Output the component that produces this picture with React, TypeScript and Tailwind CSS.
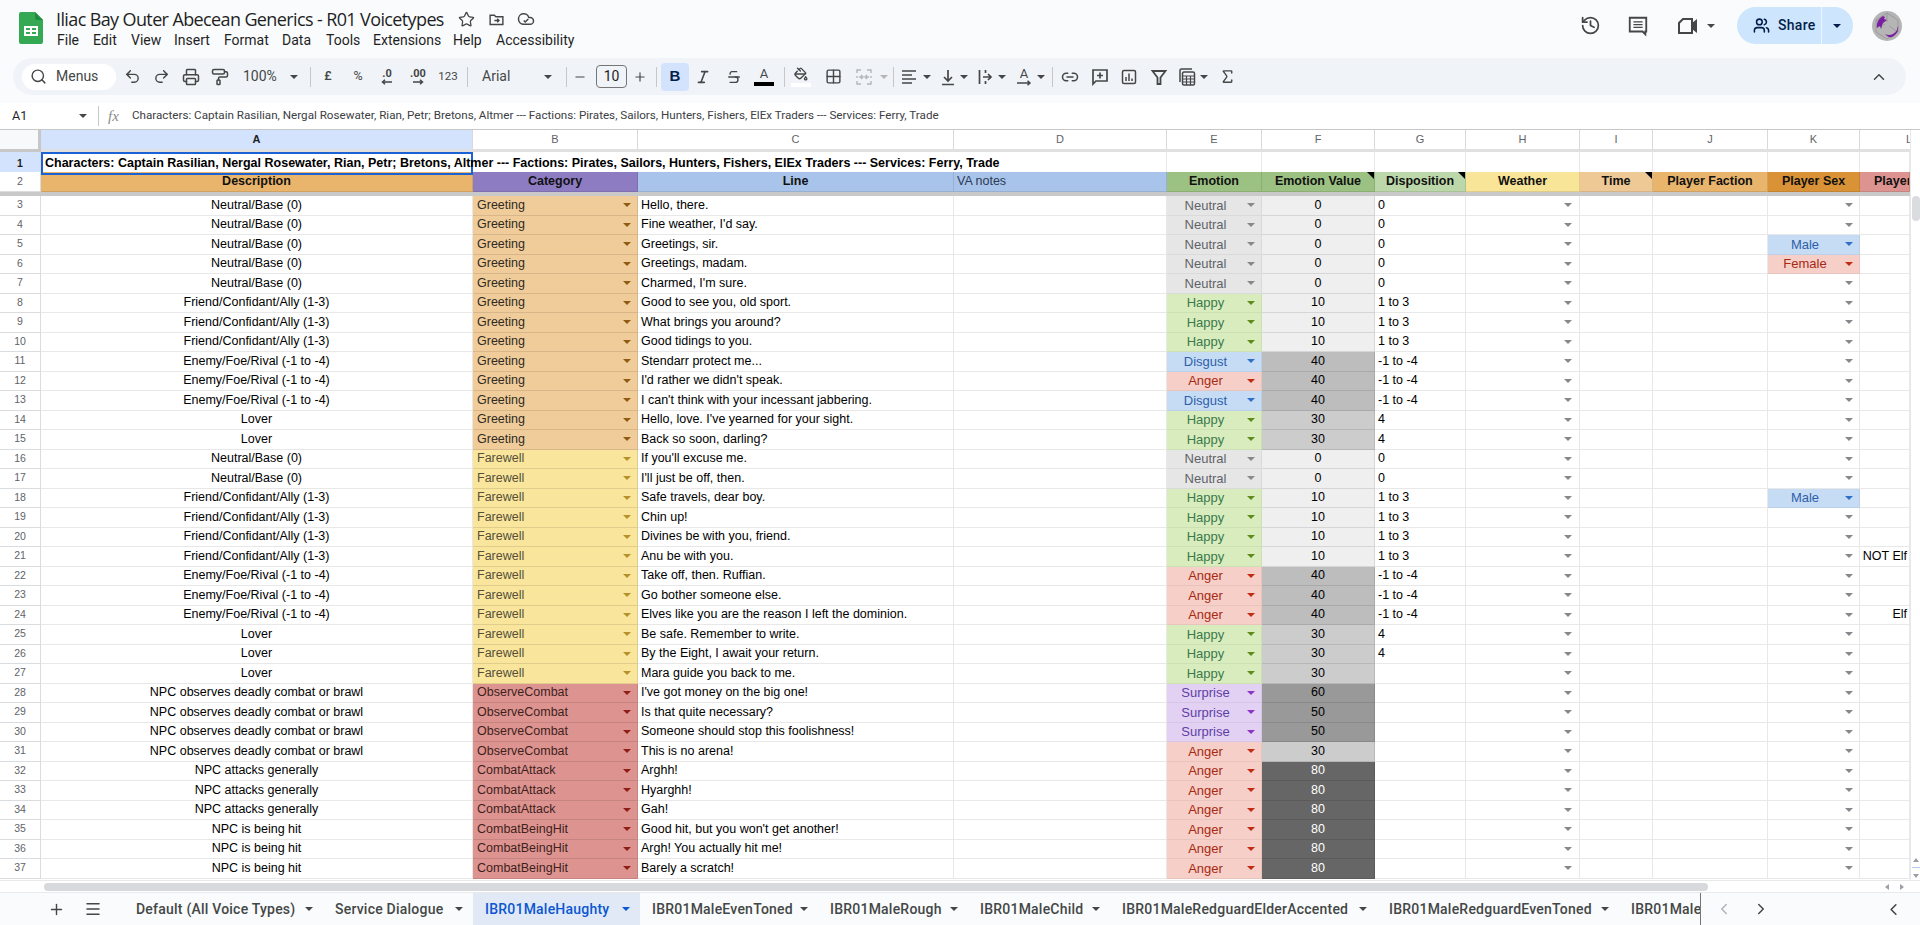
import React from "react";
import {
  Search, Undo2, Redo2, Printer, PaintRoller, Italic, Strikethrough, PaintBucket, Grid2x2, AlignLeft,
  Link2, Sigma, History, Users, ChevronUp, ChevronLeft, ChevronRight, Plus, Minus, Star, Menu,
} from "lucide-react";

const Caret = ({ className = "" }: { className?: string }) => (
  <svg viewBox="0 0 8 4" className={"w-[8px] h-[4px] shrink-0 " + className}>
    <path d="M0 0h8L4 4z" fill="currentColor" />
  </svg>
);

const Ico = ({ children, className = "" }: { children: React.ReactNode; className?: string }) => (
  <span className={"w-[20px] h-[20px] flex items-center justify-center shrink-0 text-[#444746] " + className}>{children}</span>
);

const Sep = ({ className = "" }: { className?: string }) => <span className={"w-px h-[20px] bg-[#c7c7c7] shrink-0 " + className} />;

const Logo = () => (
  <svg width="24" height="32" viewBox="0 0 24 32" className="shrink-0">
    <path d="M2 0h14l8 8v22a2 2 0 0 1-2 2H2a2 2 0 0 1-2-2V2a2 2 0 0 1 2-2z" fill="#34a853" />
    <path d="M16 0l8 8h-6a2 2 0 0 1-2-2z" fill="#1e8e3e" />
    <path d="M5 14h14v10H5z M7 16v2h4v-2z M13 16v2h4v-2z M7 20v2h4v-2z M13 20v2h4v-2z" fill="#fff" fillRule="evenodd" />
  </svg>
);

const Avatar = () => (
  <svg width="30" height="30" viewBox="0 0 30 30" className="shrink-0">
    <circle cx="15" cy="15" r="15" fill="#b5b5b5" />
    <path d="M15 2l11 7v12l-11 7-11-7V9z M15 2v9M4 9l9 5M26 21l-9-6" fill="none" stroke="#8c8c8c" strokeWidth=".6" />
    <path d="M5 17c-1-5 2-10 6-12l2 1-1 2 3 1-4 3c-1 2-1 4-2 6l-1-3z" fill="#7b1fa2" />
    <path d="M13 23c4 2 9 1 12-4l1-4c1 5-2 9-6 11-3 1-5-1-7-3z" fill="#7b1fa2" />
  </svg>
);

type Row = { n: number; a: string; b: string; c: string; e: string; f: number; g?: string; k?: string; l?: string };

const groups: [string, string, [string, string, number, string?, string?, string?][]][] = [
  ["Neutral/Base (0)", "Greeting", [
    ["Hello, there.", "Neutral", 0, "0"],
    ["Fine weather, I'd say.", "Neutral", 0, "0"],
    ["Greetings, sir.", "Neutral", 0, "0", "Male"],
    ["Greetings, madam.", "Neutral", 0, "0", "Female"],
    ["Charmed, I'm sure.", "Neutral", 0, "0"],
  ]],
  ["Friend/Confidant/Ally (1-3)", "Greeting", [
    ["Good to see you, old sport.", "Happy", 10, "1 to 3"],
    ["What brings you around?", "Happy", 10, "1 to 3"],
    ["Good tidings to you.", "Happy", 10, "1 to 3"],
  ]],
  ["Enemy/Foe/Rival (-1 to -4)", "Greeting", [
    ["Stendarr protect me...", "Disgust", 40, "-1 to -4"],
    ["I'd rather we didn't speak.", "Anger", 40, "-1 to -4"],
    ["I can't think with your incessant jabbering.", "Disgust", 40, "-1 to -4"],
  ]],
  ["Lover", "Greeting", [
    ["Hello, love. I've yearned for your sight.", "Happy", 30, "4"],
    ["Back so soon, darling?", "Happy", 30, "4"],
  ]],
  ["Neutral/Base (0)", "Farewell", [
    ["If you'll excuse me.", "Neutral", 0, "0"],
    ["I'll just be off, then.", "Neutral", 0, "0"],
  ]],
  ["Friend/Confidant/Ally (1-3)", "Farewell", [
    ["Safe travels, dear boy.", "Happy", 10, "1 to 3", "Male"],
    ["Chin up!", "Happy", 10, "1 to 3"],
    ["Divines be with you, friend.", "Happy", 10, "1 to 3"],
    ["Anu be with you.", "Happy", 10, "1 to 3", undefined, "NOT Elf"],
  ]],
  ["Enemy/Foe/Rival (-1 to -4)", "Farewell", [
    ["Take off, then. Ruffian.", "Anger", 40, "-1 to -4"],
    ["Go bother someone else.", "Anger", 40, "-1 to -4"],
    ["Elves like you are the reason I left the dominion.", "Anger", 40, "-1 to -4", undefined, "Elf"],
  ]],
  ["Lover", "Farewell", [
    ["Be safe. Remember to write.", "Happy", 30, "4"],
    ["By the Eight, I await your return.", "Happy", 30, "4"],
    ["Mara guide you back to me.", "Happy", 30],
  ]],
  ["NPC observes deadly combat or brawl", "ObserveCombat", [
    ["I've got money on the big one!", "Surprise", 60],
    ["Is that quite necessary?", "Surprise", 50],
    ["Someone should stop this foolishness!", "Surprise", 50],
    ["This is no arena!", "Anger", 30],
  ]],
  ["NPC attacks generally", "CombatAttack", [
    ["Arghh!", "Anger", 80],
    ["Hyarghh!", "Anger", 80],
    ["Gah!", "Anger", 80],
  ]],
  ["NPC is being hit", "CombatBeingHit", [
    ["Good hit, but you won't get another!", "Anger", 80],
    ["Argh! You actually hit me!", "Anger", 80],
    ["Barely a scratch!", "Anger", 80],
  ]],
];

const rows: Row[] = [];
{
  let n = 3;
  for (const [a, b, list] of groups) {
    for (const [c, e, f, g, k, l] of list) rows.push({ n: n++, a, b, c, e, f, g, k, l });
  }
}

const catStyle: Record<string, string> = {
  Greeting: "bg-[#f0cc9a] text-[#2f2a22]",
  Farewell: "bg-[#fae59c] text-[#55503a]",
  ObserveCombat: "bg-[#dd9490] text-[#3f1f1d]",
  CombatAttack: "bg-[#dd9490] text-[#3f1f1d]",
  CombatBeingHit: "bg-[#dd9490] text-[#3f1f1d]",
};
const catCaret: Record<string, string> = {
  Greeting: "text-[#8f5a12]",
  Farewell: "text-[#b3922c]",
  ObserveCombat: "text-[#8e1d17]",
  CombatAttack: "text-[#8e1d17]",
  CombatBeingHit: "text-[#8e1d17]",
};
const emoStyle: Record<string, string> = {
  Neutral: "bg-[#e6e6e6] text-[#5f6368]",
  Happy: "bg-[#d9ecbe] text-[#3a7a4c]",
  Disgust: "bg-[#c6dcf5] text-[#2f5fa8]",
  Anger: "bg-[#f6cfc8] text-[#a62a12]",
  Surprise: "bg-[#e2d1f3] text-[#5f3ea6]",
  Male: "bg-[#c6dcf5] text-[#2f5fa8]",
  Female: "bg-[#f6cfc8] text-[#a62a12]",
};
const emoCaret: Record<string, string> = {
  Neutral: "text-[#85888c]",
  Happy: "text-[#5f8a1c]",
  Disgust: "text-[#2f6fc8]",
  Anger: "text-[#c22a12]",
  Surprise: "text-[#8a35c8]",
  Male: "text-[#2f6fc8]",
  Female: "text-[#c22a12]",
};
const valStyle: Record<number, string> = {
  0: "bg-[#efefef] text-black",
  10: "bg-[#efefef] text-black",
  30: "bg-[#cccccc] text-black",
  40: "bg-[#bdbdbd] text-black",
  50: "bg-[#999999] text-black",
  60: "bg-[#999999] text-black",
  80: "bg-[#666666] text-white",
};

const GRID = "grid grid-cols-[41px_432px_165px_316px_213px_95px_113px_91px_114px_73px_115px_92px_50px]";
const CELL = "border-r border-b border-[#e8e8e8] flex items-center whitespace-nowrap overflow-hidden min-w-0";
const RH = "border-r border-b border-[#dadce0] bg-white flex items-center justify-center text-[10.5px] text-[#5f6368]";
const CH = "border-r border-[#d9d9d9] flex items-center justify-center text-[#5f6368] text-[11px] overflow-hidden";
const HEAD = "relative border-r border-b border-black/10 flex items-center justify-center font-bold text-[#111] overflow-hidden whitespace-nowrap min-w-0";
const Note = () => <span className="absolute top-0 right-0 w-[7px] h-[7px] bg-black [clip-path:polygon(0_0,100%_0,100%_100%)]" />;

const DataRow = ({ r }: { r: Row }) => (
  <div className={GRID + " h-[19.5px]"}>
    <div className={RH}>{r.n}</div>
    <div className={CELL + " justify-center"}>{r.a}</div>
    <div className={CELL + " justify-between pl-[4px] pr-[6px] border-black/10 " + catStyle[r.b]}>
      <span>{r.b}</span>
      <Caret className={catCaret[r.b]} />
    </div>
    <div className={CELL + " pl-[3px]"}>{r.c}</div>
    <div className={CELL} />
    <div className={CELL + " pr-[6px] border-black/5 text-[13px] " + emoStyle[r.e]}>
      <span className="flex-1 text-center pr-[3px]">{r.e}</span>
      <Caret className={emoCaret[r.e]} />
    </div>
    <div className={CELL + " justify-center border-black/10 " + valStyle[r.f]}>{r.f}</div>
    <div className={CELL + " pl-[3px]"}>{r.g}</div>
    <div className={CELL + " justify-end pr-[7px]"}><Caret className="text-[#85888c]" /></div>
    <div className={CELL} />
    <div className={CELL} />
    {r.k ? (
      <div className={CELL + " pr-[6px] border-black/5 text-[13px] " + emoStyle[r.k]}>
        <span className="flex-1 text-center pr-[3px]">{r.k}</span>
        <Caret className={emoCaret[r.k]} />
      </div>
    ) : (
      <div className={CELL + " justify-end pr-[6px]"}><Caret className="text-[#85888c]" /></div>
    )}
    <div className={CELL + " justify-end pr-[2px]"}>{r.l}</div>
  </div>
);

const colLetters = ["B", "C", "D", "E", "F", "G", "H", "I", "J", "K"];

const Tab = ({ label, className, active }: { label: string; className: string; active?: boolean }) => (
  <div className={"h-full flex items-center justify-between pl-[12px] pr-[10px] shrink-0 " + className + (active ? " bg-[#e1e9f7] text-[#0b57d0] font-medium" : " text-[#444746] font-medium")}>
    <span className="tracking-[0.22px] whitespace-nowrap">{label}</span>
    <Caret className={active ? "text-[#0b57d0]" : "text-[#444746]"} />
  </div>
);

export default function App() {
  return (
    <div className="w-[1920px] h-[925px] overflow-hidden bg-[#f9fbfd] flex flex-col [font-family:'Roboto',sans-serif]">
      {/* Title bar */}
      <div className="h-[58px] flex items-start shrink-0">
        <div className="ml-[19px] mt-[12px]"><Logo /></div>
        <div className="ml-[13px] mt-[7px] flex flex-col">
          <div className="h-[24px] flex items-center">
            <span className="text-[18px] text-[#1f1f1f] w-[402px] whitespace-nowrap [font-family:'Open_Sans',sans-serif] tracking-[-0.62px]">Iliac Bay Outer Abecean Generics - R01 Voicetypes</span>
            <Star size={17} className="text-[#444746]" strokeWidth={1.8} />
            <span className="ml-[13px] text-[#444746]">
              <svg width="17" height="17" viewBox="0 0 24 24" fill="none" stroke="currentColor" strokeWidth="2"><path d="M3 6h6l2 2h10v11H3z" /><path d="M9 13.5h6M13 11l2.5 2.5L13 16" /></svg>
            </span>
            <span className="ml-[12px] text-[#444746]">
              <svg width="18" height="18" viewBox="0 0 24 24" fill="none" stroke="currentColor" strokeWidth="2"><path d="M17.5 19H9a7 7 0 1 1 6.71-9h1.79a4.5 4.5 0 1 1 0 9Z" /><path d="m9 14 2 2 4-4" /></svg>
            </span>
          </div>
          <div className="h-[20px] mt-[-1px] flex items-center text-[14px] text-[#1f1f1f] ml-[1px]">
            <span className="w-[36px]">File</span>
            <span className="w-[38px]">Edit</span>
            <span className="w-[43px]">View</span>
            <span className="w-[50px]">Insert</span>
            <span className="w-[58px]">Format</span>
            <span className="w-[44px]">Data</span>
            <span className="w-[47px]">Tools</span>
            <span className="w-[80px]">Extensions</span>
            <span className="w-[43px]">Help</span>
            <span>Accessibility</span>
          </div>
        </div>
        <div className="ml-auto mt-[7px] h-[37px] flex items-center text-[#444746] mr-[18px]">
          <History size={21} strokeWidth={2} />
          <span className="ml-[26px]">
            <svg width="22" height="22" viewBox="0 0 24 24" fill="none" stroke="currentColor" strokeWidth="2"><path d="M3 3h18v15h-1v3l-3-3H3z" /><path d="M7 7.5h10M7 10.5h10M7 13.5h10" strokeWidth="1.6" /></svg>
          </span>
          <span className="ml-[27px]">
            <svg width="24" height="22" viewBox="0 0 24 22" fill="none" stroke="currentColor" strokeWidth="2"><path d="M7 4h9v14H3V8z" /><path d="M16 8l5-4v14l-5-4z" fill="currentColor" stroke="none" /></svg>
          </span>
          <Caret className="ml-[7px] text-[#444746]" />
          <div className="ml-[22px] w-[116px] h-[37px] rounded-full bg-[#cde5fd] flex items-center text-[#041e49] overflow-hidden">
            <Users size={17} className="ml-[16px]" strokeWidth={2.2} />
            <span className="ml-[8px] text-[14px] font-medium tracking-[0.3px]">Share</span>
            <span className="ml-auto w-px h-full bg-[#f9fbfd] opacity-70" />
            <span className="w-[31px] flex justify-center pr-[2px]"><Caret className="text-[#041e49]" /></span>
          </div>
          <span className="ml-[19px]"><Avatar /></span>
        </div>
      </div>

      {/* Toolbar */}
      <div className="ml-[13px] mr-[14px] h-[37px] rounded-full bg-[#f0f4f9] flex items-center shrink-0 text-[#444746]">
        <div className="ml-[9px] w-[94px] h-[26px] rounded-full bg-white flex items-center pl-[8px] shrink-0">
          <Search size={17} strokeWidth={2} />
          <span className="ml-[9px] text-[14px]">Menus</span>
        </div>
        <Ico className="ml-[6px]"><Undo2 size={17} /></Ico>
        <Ico className="ml-[9px]"><Redo2 size={17} /></Ico>
        <Ico className="ml-[10px]"><Printer size={18} /></Ico>
        <Ico className="ml-[9px]"><PaintRoller size={18} /></Ico>
        <span className="ml-[13px] w-[40px] text-[14px] shrink-0">100%</span>
        <Caret className="ml-[7px]" />
        <Sep className="ml-[12px]" />
        <Ico className="ml-[7px]"><span className="text-[12.5px] font-medium">£</span></Ico>
        <Ico className="ml-[10px]"><span className="text-[12.5px]">%</span></Ico>
        <Ico className="ml-[9px]">
          <span className="flex flex-col items-center leading-none">
            <span className="text-[11px] font-bold leading-[11px]">.0</span>
            <svg width="12" height="6" viewBox="0 0 12 6"><path d="M11 3H2M4 .7 1.500 3 4 5.300" fill="none" stroke="currentColor" strokeWidth="1.500" /></svg>
          </span>
        </Ico>
        <Ico className="ml-[11px]">
          <span className="flex flex-col items-center leading-none">
            <span className="text-[11px] font-bold leading-[11px]">.00</span>
            <svg width="12" height="6" viewBox="0 0 12 6"><path d="M1 3h9M8 .7 10.500 3 8 5.300" fill="none" stroke="currentColor" strokeWidth="1.500" /></svg>
          </span>
        </Ico>
        <Ico className="ml-[10px]"><span className="text-[11.5px]">123</span></Ico>
        <Sep className="ml-[9px]" />
        <span className="ml-[14px] w-[62px] text-[14px] shrink-0">Arial</span>
        <Caret />
        <Sep className="ml-[14px]" />
        <Ico className="ml-[3px]"><Minus size={14} /></Ico>
        <span className="ml-[6px] w-[31px] h-[23px] border border-[#747775] rounded-[4px] flex items-center justify-center text-[14px] text-[#1f1f1f] shrink-0">10</span>
        <Ico className="ml-[3px]"><Plus size={14} /></Ico>
        <Sep className="ml-[6px]" />
        <span className="ml-[4px] w-[28px] h-[28px] rounded-[4px] bg-[#d3e3fd] flex items-center justify-center text-[#041e49] text-[15px] font-bold shrink-0 [font-family:'Liberation_Sans',sans-serif]">B</span>
        <Ico className="ml-[4px]"><Italic size={16} strokeWidth={2.4} /></Ico>
        <Ico className="ml-[11px]"><Strikethrough size={16} strokeWidth={2} /></Ico>
        <Ico className="ml-[10px]">
          <span className="flex flex-col items-center w-[20px]">
            <span className="text-[13px] leading-[13px]">A</span>
            <span className="mt-[2px] w-[20px] h-[4px] bg-black" />
          </span>
        </Ico>
        <Sep className="ml-[10px]" />
        <Ico className="ml-[6px]">
          <span className="flex flex-col items-center w-[20px]">
            <PaintBucket size={14} strokeWidth={2.4} />
            <span className="mt-[2px] w-[20px] h-[4px] bg-white" />
          </span>
        </Ico>
        <Ico className="ml-[12px]"><Grid2x2 size={17} /></Ico>
        <Ico className="ml-[11px] text-[#b4b6b8]">
          <svg width="18" height="18" viewBox="0 0 18 18" fill="none" stroke="#b4b6b8" strokeWidth="1.400"><path d="M2 5V2h4M12 2h4v3M2 13v3h4M12 16h4v-3M2 8v2M16 8v2M4 9h3M14 9h-3M6 7l2 2-2 2M12 7l-2 2 2 2" /></svg>
        </Ico>
        <Caret className="ml-[6px] text-[#b4b6b8]" />
        <Sep className="ml-[5px]" />
        <Ico className="ml-[5px]">
          <svg width="18" height="18" viewBox="0 0 18 18" stroke="currentColor" strokeWidth="1.600"><path d="M2 3h14M2 7h10M2 11h14M2 15h10" /></svg>
        </Ico>
        <Caret className="ml-[4px]" />
        <Ico className="ml-[7px]">
          <svg width="18" height="18" viewBox="0 0 18 18" fill="none" stroke="currentColor" strokeWidth="1.700"><path d="M3 16.500h12M9 2v11M5 9l4 4 4-4" /></svg>
        </Ico>
        <Caret className="ml-[2px]" />
        <Ico className="ml-[8px]">
          <svg width="18" height="18" viewBox="0 0 18 18" fill="none" stroke="currentColor" strokeWidth="1.700"><path d="M2.500 2v14M6 9h8M11 6l3 3-3 3M8.500 2v3M8.500 13v3" /></svg>
        </Ico>
        <Caret className="ml-[2px]" />
        <Ico className="ml-[8px]">
          <span className="flex flex-col items-center">
            <span className="text-[13px] leading-[12px]">A</span>
            <svg width="16" height="6" viewBox="0 0 16 6" fill="none" stroke="currentColor" strokeWidth="1.500"><path d="M1 3h13M11.500 .7 14 3l-2.500 2.300" /></svg>
          </span>
        </Ico>
        <Caret className="ml-[3px]" />
        <Sep className="ml-[7px]" />
        <Ico className="ml-[7px]"><Link2 size={18} /></Ico>
        <Ico className="ml-[10px]">
          <svg width="18" height="18" viewBox="0 0 18 18" fill="none" stroke="currentColor" strokeWidth="1.700"><path d="M2 2h14v11H5l-3 3z" /><path d="M9 4.500v6M6 7.500h6" /></svg>
        </Ico>
        <Ico className="ml-[9px]">
          <svg width="18" height="18" viewBox="0 0 18 18" fill="none" stroke="currentColor" strokeWidth="1.500"><rect x="2.500" y="2.500" width="13" height="13" rx="1.500" /><path d="M6 13V9M9 13V5.500M12 13v-2.500" /></svg>
        </Ico>
        <Ico className="ml-[10px]">
          <svg width="18" height="18" viewBox="0 0 18 18" fill="none" stroke="currentColor" strokeWidth="1.800"><path d="M2.500 3h13L10.500 9.500V16h-3V9.500z" /></svg>
        </Ico>
        <Ico className="ml-[8px]">
          <svg width="20" height="20" viewBox="0 0 20 20" fill="none" stroke="currentColor" strokeWidth="1.500"><path d="M3 15V3.500A1.500 1.500 0 0 1 4.500 2H15" /><rect x="5.500" y="5" width="12" height="13" rx="1.500" /><path d="M5.500 9h12M5.500 12h12M5.500 15h12M9.500 9v9M13.500 9v9" strokeWidth="1.200" /></svg>
        </Ico>
        <Caret className="ml-[3px]" />
        <Ico className="ml-[9px]"><Sigma size={17} /></Ico>
        <Ico className="ml-auto mr-[17px]"><ChevronUp size={18} /></Ico>
      </div>

      {/* Formula bar */}
      <div className="mt-[8px] h-[26px] bg-white flex items-center shrink-0 text-[#444746]">
        <span className="ml-[12px] w-[67px] text-[12.5px] text-[#1f1f1f]">A1</span>
        <Caret className="text-[#444746]" />
        <Sep className="ml-[11px]" />
        <span className="ml-[9px] w-[24px] [font-family:'Liberation_Serif',serif] italic text-[15px] text-[#8a8a8a]">fx</span>
        <span className="text-[11.65px] text-[#3c4043] whitespace-nowrap">Characters: Captain Rasilian, Nergal Rosewater, Rian, Petr; Bretons, Altmer --- Factions: Pirates, Sailors, Hunters, Fishers, ElEx Traders --- Services: Ferry, Trade</span>
      </div>

      {/* Grid */}
      <div className="h-[763px] mt-0 bg-white flex flex-col border-t border-[#c7c7c7] shrink-0 [font-family:'Liberation_Sans',sans-serif] text-[12.5px] text-black">
        <div className="h-[750px] flex overflow-hidden shrink-0">
          <div className="w-[1910px] shrink-0 overflow-hidden">
            {/* column letters */}
            <div className={GRID + " h-[22px] border-b-[3px] border-[#e0e0e0]"}>
              <div className="bg-[#f8f9fa] border-r-[3px] border-[#c7c7c7] relative">
                <div className="absolute left-0 right-[-3px] bottom-[-3px] h-[3px] bg-[#c7c7c7]" />
              </div>
              <div className="bg-[#d3e3fd] flex items-center justify-center text-[11px] font-bold text-[#1f1f1f] border-r border-[#d9d9d9]">A</div>
              {colLetters.map((c) => <div key={c} className={CH}>{c}</div>)}
              <div className="flex items-center text-[#5f6368] text-[11px] pl-[46px]">L</div>
            </div>
            {/* row 1 */}
            <div className={GRID + " h-[20px]"}>
              <div className="bg-[#d3e3fd] flex items-center justify-center text-[10.5px] font-bold text-[#1f1f1f] border-r border-[#dadce0]">1</div>
              <div className="relative border-2 border-[#1a62d6] flex items-center pl-[2px] z-10 whitespace-nowrap font-bold min-w-0">
                Characters: Captain Rasilian, Nergal Rosewater, Rian, Petr; Bretons, Altmer --- Factions: Pirates, Sailors, Hunters, Fishers, ElEx Traders --- Services: Ferry, Trade
              </div>
              <div className="border-b border-[#e8e8e8]" />
              <div className="border-b border-[#e8e8e8]" />
              <div className="border-b border-r border-[#e8e8e8]" />
              {["e", "f", "g", "h", "i", "j", "k", "l"].map((k) => <div key={k} className={CELL} />)}
            </div>
            {/* row 2 */}
            <div className={GRID + " h-[20px]"}>
              <div className={RH}>2</div>
              <div className={HEAD + " bg-[#e9b46b]"}>Description</div>
              <div className={HEAD + " bg-[#8e7cc3]"}>Category</div>
              <div className={HEAD + " bg-[#a9c4ea]"}>Line</div>
              <div className={HEAD + " bg-[#a9c4ea] justify-start! pl-[3px] font-normal! text-[#2b3a55]!"}>VA notes</div>
              <div className={HEAD + " bg-[#9cc283]"}>Emotion</div>
              <div className={HEAD + " bg-[#9cc283]"}>Emotion Value<Note /></div>
              <div className={HEAD + " bg-[#bcd8aa]"}>Disposition<Note /></div>
              <div className={HEAD + " bg-[#f9e597]"}>Weather</div>
              <div className={HEAD + " bg-[#efc995]"}>Time<Note /></div>
              <div className={HEAD + " bg-[#e9b46b]"}>Player Faction</div>
              <div className={HEAD + " bg-[#da9236]"}>Player Sex</div>
              <div className={HEAD + " bg-[#dd9490] justify-start! pl-[14px]"}>Player Race</div>
            </div>
            <div className="h-[4px] bg-[#c9c9c9]" />
            {rows.map((r) => <DataRow key={r.n} r={r} />)}
          </div>
          {/* vertical scrollbar */}
          <div className="w-[10px] shrink-0 bg-white border-l border-[#e8e8e8] flex flex-col items-center pt-[66px]">
            <div className="w-[8px] h-[25px] rounded-full bg-[#dadce0]" />
            <svg viewBox="0 0 6 4" className="w-[6px] h-[4px] mt-[637px] text-[#9aa0a6]"><path d="M0 4h6L3 0z" fill="currentColor" /></svg>
            <div className="w-[8px] h-px bg-[#aecbfa] mt-[5px]" />
            <svg viewBox="0 0 6 4" className="w-[6px] h-[4px] mt-[6px] text-[#9aa0a6]"><path d="M0 0h6L3 4z" fill="currentColor" /></svg>
          </div>
        </div>
        {/* horizontal scrollbar */}
        <div className="h-[12px] border-t border-[#e8e8e8] flex items-center shrink-0">
          <div className="ml-[44px] w-[1664px] h-[8px] rounded-full bg-[#d7d9dd]" />
          <svg viewBox="0 0 4 6" className="w-[4px] h-[6px] ml-[177px] text-[#9aa0a6]"><path d="M4 0v6L0 3z" fill="currentColor" /></svg>
          <svg viewBox="0 0 4 6" className="w-[4px] h-[6px] ml-[11px] text-[#9aa0a6]"><path d="M0 0v6l4-3z" fill="currentColor" /></svg>
        </div>
      </div>

      {/* Sheet tabs */}
      <div className="flex-1 flex items-center bg-[#f9fbfd] border-t border-[#e8eaed] text-[14px] min-h-0">
        <Ico className="ml-[46px]"><Plus size={17} /></Ico>
        <Ico className="ml-[17px]"><Menu size={18} /></Ico>
        <div className="ml-[21px] h-full flex items-center overflow-hidden">
          <Tab label="Default (All Voice Types)" className="w-[199px]" />
          <Tab label="Service Dialogue" className="w-[150px]" />
          <Tab label="IBR01MaleHaughty" className="w-[167px]" active />
          <Tab label="IBR01MaleEvenToned" className="w-[178px]" />
          <Tab label="IBR01MaleRough" className="w-[150px]" />
          <Tab label="IBR01MaleChild" className="w-[142px]" />
          <Tab label="IBR01MaleRedguardElderAccented" className="w-[267px]" />
          <Tab label="IBR01MaleRedguardEvenToned" className="w-[242px]" />
          <div className="w-[82px] h-full flex items-center pl-[12px] overflow-hidden border-r border-[#747775] text-[#444746] font-medium shrink-0">
            <span className="tracking-[0.22px] whitespace-nowrap">IBR01MaleI</span>
          </div>
        </div>
        <ChevronLeft size={18} className="ml-[14px] text-[#b0b3b8]" />
        <ChevronRight size={18} className="ml-[19px] text-[#444746]" />
        <ChevronLeft size={19} className="ml-[114px] text-[#444746]" />
      </div>
    </div>
  );
}
